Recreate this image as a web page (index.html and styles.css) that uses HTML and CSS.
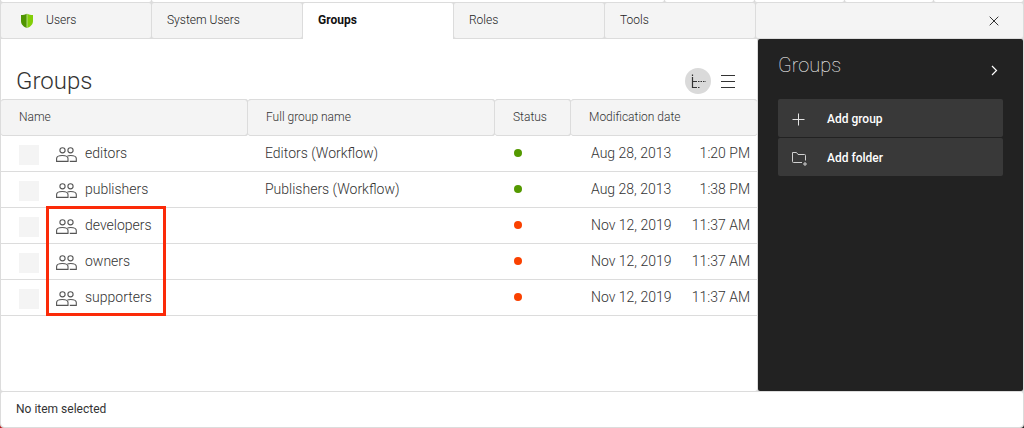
FILE: index.html
```html
<!DOCTYPE html>
<html lang="en">
<head>
<meta charset="utf-8">
<title>Groups</title>
<link rel="stylesheet" href="styles.css">
</head>
<body>
<svg class="sprite" aria-hidden="true">
  <symbol id="people" viewBox="0 0 21 16">
    <g fill="none" stroke="#555" stroke-width="1.100">
      <circle cx="6.500" cy="3.300" r="2.600"/>
      <circle cx="14.500" cy="3.300" r="2.600"/>
      <path d="M.6 14.400V11.500C.6 9.500 2.500 8.500 6.300 8.500S12 9.500 12 11.500V14.400Z"/>
      <path d="M11.500 9C12.300 8.600 13.200 8.500 14.500 8.500 18.300 8.500 20.300 9.500 20.300 11.500V14.400H13.800"/>
    </g>
  </symbol>
</svg>
<div class="shell">
  <div class="strip">
    <span class="strip-wide"></span><span class="strip-wide"></span><span></span><span></span><span></span><span></span>
  </div>
  <nav class="tabs">
    <a class="tab tab-app" href="#users">
      <svg width="14" height="16" viewBox="0 0 14 16" aria-hidden="true">
        <path d="M7 .8C5.200 1.800 3.200 2 1 2V8C1 11.500 3.500 13.800 7 15Z" fill="#4f9500"/>
        <path d="M7 .8C8.800 1.800 10.800 2 13 2V8C13 11.500 10.500 13.800 7 15Z" fill="#82ce08"/>
        <path d="M7 1V15" stroke="#c9e8a4" stroke-width=".8"/>
      </svg>
      <span>Users</span>
    </a>
    <a class="tab" href="#system">System Users</a>
    <a class="tab tab-active" href="#groups" aria-current="page">Groups</a>
    <a class="tab" href="#roles">Roles</a>
    <a class="tab" href="#tools">Tools</a>
    <div class="tab-rest">
      <button class="icon-button" type="button" aria-label="Close">
        <svg width="10" height="10" viewBox="0 0 10 10"><path d="M.7.7 9.300 9.300M9.300.7.7 9.300" stroke="#333" fill="none"/></svg>
      </button>
    </div>
  </nav>
  <div class="main">
    <main class="content">
      <header class="content-head">
        <h1>Groups</h1>
        <div class="views">
          <button class="icon-button view-on" type="button" aria-label="Tree view">
            <svg width="26" height="26" viewBox="0 0 26 26" fill="none" stroke="#333" stroke-width="1.200">
              <path d="M7.500 6.500V8M7.500 9V19.500H12M7.500 13.500H12"/>
              <path d="M13 13.500H21" stroke-dasharray="1.500 1"/>
              <path d="M13 19.500H14.500"/>
            </svg>
          </button>
          <button class="icon-button" type="button" aria-label="List view">
            <svg width="14" height="14" viewBox="0 0 14 14"><path d="M0 1.500H14M0 7.500H14M0 13.500H14" stroke="#333" fill="none"/></svg>
          </button>
        </div>
      </header>
      <table class="grid">
        <colgroup><col class="col-name"><col class="col-full"><col class="col-status"><col><col></colgroup>
        <thead>
          <tr><th scope="col">Name</th><th scope="col">Full group name</th><th scope="col">Status</th><th scope="col" colspan="2">Modification date</th></tr>
        </thead>
        <tbody>
          <tr>
            <td><div class="name"><input type="checkbox" aria-label="Select editors"><svg class="people" aria-hidden="true"><use href="#people"/></svg><span>editors</span></div></td>
            <td>Editors (Workflow)</td><td><span class="dot" role="img" aria-label="Published"></span></td><td class="date">Aug 28, 2013</td><td class="time">1:20 PM</td>
          </tr>
          <tr>
            <td><div class="name"><input type="checkbox" aria-label="Select publishers"><svg class="people" aria-hidden="true"><use href="#people"/></svg><span>publishers</span></div></td>
            <td>Publishers (Workflow)</td><td><span class="dot" role="img" aria-label="Published"></span></td><td class="date">Aug 28, 2013</td><td class="time">1:38 PM</td>
          </tr>
          <tr>
            <td class="marked"><div class="name"><input type="checkbox" aria-label="Select developers"><svg class="people" aria-hidden="true"><use href="#people"/></svg><span>developers</span></div><div class="marker"></div></td>
            <td></td><td><span class="dot dot-off" role="img" aria-label="Unpublished"></span></td><td class="date">Nov 12, 2019</td><td class="time">11:37 AM</td>
          </tr>
          <tr>
            <td><div class="name"><input type="checkbox" aria-label="Select owners"><svg class="people" aria-hidden="true"><use href="#people"/></svg><span>owners</span></div></td>
            <td></td><td><span class="dot dot-off" role="img" aria-label="Unpublished"></span></td><td class="date">Nov 12, 2019</td><td class="time">11:37 AM</td>
          </tr>
          <tr>
            <td><div class="name"><input type="checkbox" aria-label="Select supporters"><svg class="people" aria-hidden="true"><use href="#people"/></svg><span>supporters</span></div></td>
            <td></td><td><span class="dot dot-off" role="img" aria-label="Unpublished"></span></td><td class="date">Nov 12, 2019</td><td class="time">11:37 AM</td>
          </tr>
        </tbody>
      </table>
    </main>
    <aside class="actions">
      <div class="actions-head">
        <h2>Groups</h2>
        <button class="icon-button" type="button" aria-label="Collapse">
          <svg width="7" height="11" viewBox="0 0 7 11"><path d="M1 1 5.500 5.500 1 10" stroke="#fff" stroke-width="1.200" fill="none"/></svg>
        </button>
      </div>
      <button class="action" type="button">
        <svg width="16" height="16" viewBox="0 0 16 16" aria-hidden="true"><path d="M.5 8.500H12.500M6.500 2.500V14.500" stroke="#e4e4e4" fill="none"/></svg>
        Add group
      </button>
      <button class="action" type="button">
        <svg width="16" height="16" viewBox="0 0 16 16" aria-hidden="true" fill="none" stroke="#d0d0d0"><path d="M10 12.500H1.500C.8 12.500.5 12.200.5 11.500V2.500H4.500L6 4.500H12.500C13.200 4.500 13.500 4.800 13.500 5.500V10.500M13 12V16M11 14H15"/></svg>
        Add folder
      </button>
    </aside>
  </div>
  <footer class="status">No item selected</footer>
</div>
</body>
</html>
```
FILE: styles.css
```css
* { box-sizing: border-box; }

body {
  margin: 0;
  background: linear-gradient(90deg, #b01818 50%, #222 50%);
  color: #333;
  font: 300 12px/16px Roboto, "Open Sans", sans-serif;
}

.sprite { position: absolute; width: 0; height: 0; }
svg { display: block; }

.shell {
  display: flex;
  flex-direction: column;
  gap: 1px;
  min-height: 100vh;
  padding: 0 1px 1px;
  background: #dcdcdc;
  border-radius: 0 0 4px 4px;
}

.strip { display: flex; gap: 1px; height: 2px; }
.strip span { flex: 89; background: #fff; border-radius: 0 0 2px 2px; }
.strip .strip-wide { flex: 151; }
.strip .strip-wide + .strip-wide { flex: 514; }

.tabs { display: flex; gap: 1px; height: 35px; }
.tab, .tab-rest { background: #f4f4f4; border-radius: 2px; }
.tab {
  flex: 0 1 150px;
  padding: 9px 15px;
  color: #222;
  text-decoration: none;
  white-space: nowrap;
}
.tab-app { display: flex; gap: 12px; padding-left: 19px; }
.tab-app svg { margin-top: 1px; }
.tab-active {
  height: 36px;
  background: #fff;
  border-radius: 2px 2px 0 0;
  color: #111;
  font-weight: 700;
}
.tab-rest { flex: 1; display: flex; justify-content: flex-end; align-items: center; padding-right: 24px; }

.icon-button {
  display: grid;
  place-items: center;
  padding: 0;
  border: 0;
  background: none;
}

.main { flex: 1; display: flex; gap: 1px; }
.content { flex: 1; background: #fff; border-radius: 0 0 2px 2px; }
.content-head {
  display: flex;
  justify-content: space-between;
  align-items: center;
  height: 60px;
  padding: 24px 22px 0 15px;
}
h1, h2 { margin: 0; font-weight: 300; }
h1 { font-size: 24px; line-height: 36px; }
.views { display: flex; align-items: center; gap: 10px; }
.view-on { width: 26px; height: 26px; border-radius: 50%; background: #dadada; }

.grid { width: 100%; table-layout: fixed; border-collapse: separate; border-spacing: 0; }
.col-name, .col-full { width: 247px; }
.col-status { width: 76px; }
.grid thead { background: #dcdcdc; }
th {
  height: 37px;
  padding: 0 18px 1px;
  border: solid #dcdcdc;
  border-width: 1px 1px 1px 0;
  border-radius: 3px;
  background: #f4f4f4;
  background-clip: padding-box;
  text-align: left;
  font-weight: 300;
}
th:last-child { border-right: 0; }
td {
  height: 36px;
  padding: 0 17px 2px;
  border-bottom: 1px solid #dcdcdc;
  font-size: 14px;
  line-height: 20px;
  white-space: nowrap;
}
.date { padding: 0 0 2px 20px; }
.time { padding: 0 7px 2px 0; text-align: right; }
.name { display: flex; align-items: center; padding-left: 1px; }
.name input {
  appearance: none;
  width: 20px;
  height: 20px;
  margin: 4px 17px 0 0;
  background: #f4f4f4;
}
.people { width: 21px; height: 16px; margin: 4px 8px 0 0; }
.dot { display: block; width: 8px; height: 8px; margin-left: 2px; border-radius: 50%; background: #549900; }
.dot-off { background: #fa4100; }

.marked { position: relative; }
.marker {
  position: absolute;
  z-index: 1;
  top: -2px;
  left: 45px;
  width: 120px;
  height: 110px;
  border: 3px solid #fb2a08;
  pointer-events: none;
}

.actions {
  flex: 0 0 265px;
  display: flex;
  flex-direction: column;
  gap: 1px;
  padding: 12px 20px;
  background: #222;
  border-radius: 2px;
  color: #fff;
}
.actions-head { display: flex; justify-content: space-between; padding: 0 5px 19px 0; }
h2 { font-size: 20px; line-height: 28px; color: #fff; font-weight: 100; }
.actions-head .icon-button { margin-top: 10px; }
.action {
  display: flex;
  align-items: center;
  gap: 19px;
  height: 38px;
  padding: 2px 14px 0;
  border: 0;
  border-radius: 2px;
  background: #393939;
  color: #fff;
  font: 500 12px/16px Roboto, "Open Sans", sans-serif;
}

.status { height: 35px; padding: 9px 15px; background: #fff; border-radius: 2px 2px 4px 4px; font-weight: 400; }
```
